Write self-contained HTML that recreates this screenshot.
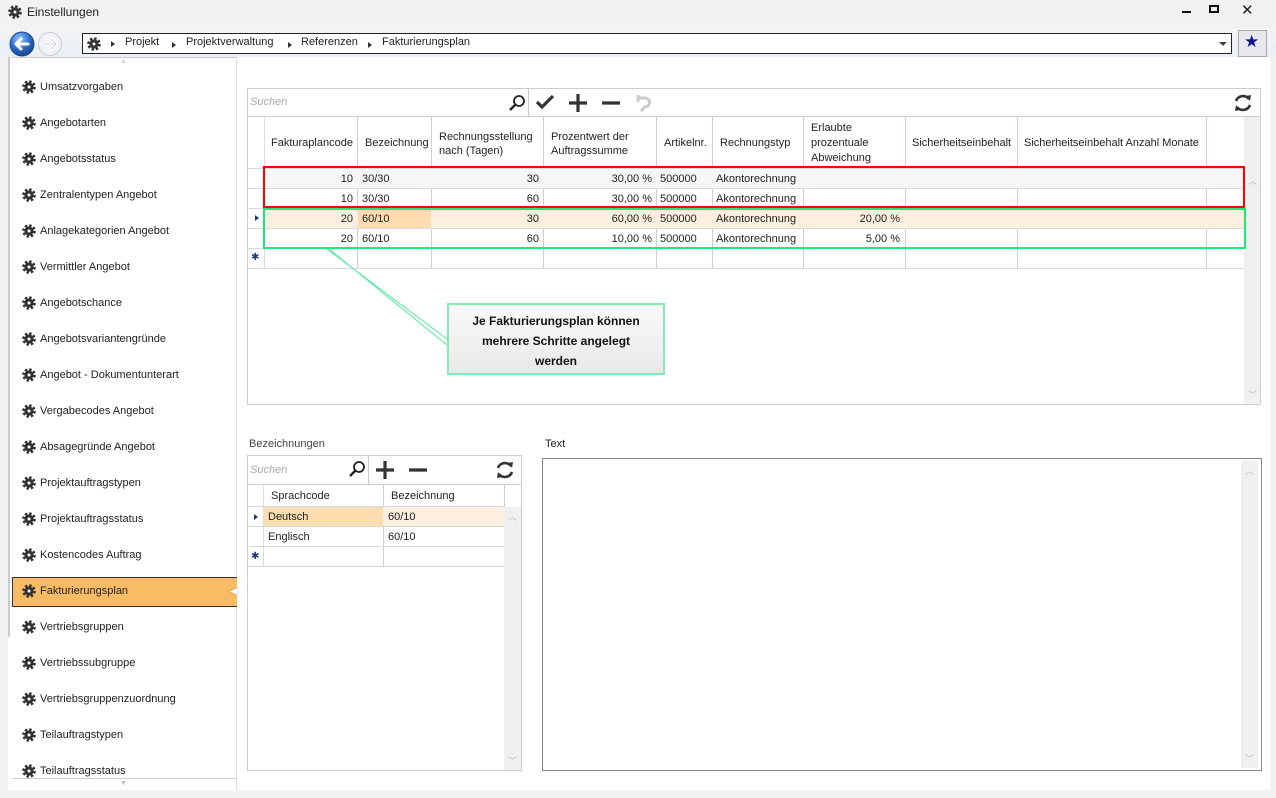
<!DOCTYPE html>
<html><head><meta charset="utf-8"><style>
*{margin:0;padding:0;box-sizing:border-box}
body{width:1276px;height:798px;background:#f2f2f2;font-family:"Liberation Sans",sans-serif;font-size:11px;color:#222;position:relative;overflow:hidden}
.a{position:absolute}
.t{position:absolute;white-space:nowrap}
.g{position:absolute;width:14px;height:14px}
.si{position:absolute;left:22px;height:20px;line-height:20px;padding-left:18px;font-size:11px}
.si svg{position:absolute;left:0;top:3px}
.vl{position:absolute;width:1px;background:#c8d0dc}
.hl{position:absolute;height:1px;background:#d5dae2}
.c{position:absolute;height:20px;line-height:20px;white-space:nowrap}
.r{text-align:right}
.tri{position:absolute;width:0;height:0;border-left:4px solid #333;border-top:3px solid transparent;border-bottom:3px solid transparent}
</style></head><body>
<svg width="0" height="0" style="position:absolute"><defs>
<symbol id="gear" viewBox="0 0 14 14"><circle cx="7" cy="7" r="4.6" fill="#333"/><circle cx="7" cy="7" r="5.4" fill="none" stroke="#333" stroke-width="2.8" stroke-dasharray="2.4 1.84"/><circle cx="7" cy="7" r="1.5" fill="#fff"/></symbol>
<symbol id="mag" viewBox="0 0 18 18"><circle cx="11" cy="7" r="5" fill="none" stroke="#222" stroke-width="1.8"/><path d="M7.5 10.5L2 16" stroke="#222" stroke-width="2.4"/></symbol>
<symbol id="ref" viewBox="0 0 20 20"><path d="M16 6A7.5 7.5 0 0 0 3 8M4 14A7.5 7.5 0 0 0 17 12" stroke="#333" stroke-width="2.6" fill="none"/><path d="M13 3L18 2L17 8ZM7 17L2 18L3 12Z" fill="#333"/></symbol>
</defs></svg>

<!-- title bar -->
<svg class="g" style="left:8px;top:5px"><use href="#gear"/></svg>
<div class="t" style="left:27px;top:5px;font-size:12px">Einstellungen</div>
<div class="a" style="left:1182px;top:11px;width:9px;height:2px;background:#111"></div>
<div class="a" style="left:1209px;top:5px;width:10px;height:8px;border:2px solid #111"></div>
<div class="t" style="left:1241px;top:1px;font-size:15px">✕</div>

<!-- nav bar -->
<div class="a" style="left:0;top:28px;width:1276px;height:29px;background:linear-gradient(#f4f4f4,#e9eef7)"></div>
<svg class="a" style="left:9px;top:31px" width="56" height="26">
<defs><radialGradient id="bl" cx="40%" cy="30%" r="70%"><stop offset="0" stop-color="#9ccaf8"/><stop offset=".6" stop-color="#2a6cc8"/><stop offset="1" stop-color="#17468f"/></radialGradient></defs>
<circle cx="13" cy="13" r="12" fill="url(#bl)" stroke="#1b4c90"/>
<path d="M19 13H8M12 8L7 13L12 18" stroke="#fff" stroke-width="3" fill="none" stroke-linecap="round" stroke-linejoin="round"/>
<circle cx="41" cy="13" r="11.5" fill="#f2f3f6" stroke="#c8ccd4"/>
<path d="M35 13H46M42 8L47 13L42 18" stroke="#fff" stroke-width="3" fill="none" stroke-linecap="round" stroke-linejoin="round"/>
<path d="M35 13H46M42 8L47 13L42 18" stroke="#cfd3da" stroke-width="1" fill="none"/>
</svg>
<div class="a" style="left:82px;top:33px;width:1150px;height:21px;border:1px solid #222;background:#fff"></div>
<svg class="g" style="left:87px;top:37px"><use href="#gear"/></svg>
<div class="tri" style="left:111px;top:41px"></div><div class="t" style="left:125px;top:36px">Projekt</div>
<div class="tri" style="left:172px;top:42px"></div><div class="t" style="left:186px;top:36px">Projektverwaltung</div>
<div class="tri" style="left:288px;top:42px"></div><div class="t" style="left:301px;top:36px">Referenzen</div>
<div class="tri" style="left:368px;top:42px"></div><div class="t" style="left:382px;top:36px">Fakturierungsplan</div>
<div class="a" style="left:1219px;top:42px;width:0;height:0;border-top:4px solid #444;border-left:4px solid transparent;border-right:4px solid transparent"></div>
<div class="a" style="left:1238px;top:30px;width:29px;height:27px;border:1px solid #aaa;background:#e8e8ec"></div>
<div class="t" style="left:1244px;top:32px;font-size:17px;color:#0a1a8c">★</div>

<!-- content white -->
<div class="a" style="left:8px;top:57px;width:1262px;height:733px;background:#fff"></div>
<div class="a" style="left:8px;top:57px;width:2px;height:580px;background:#ccc"></div>
<div class="a" style="left:12px;top:57px;width:225px;height:1px;background:#ccc"></div>
<div class="t" style="left:120px;top:58px;font-size:7px;color:#ccc">▲</div>
<div class="a" style="left:236px;top:57px;width:1px;height:733px;background:#ddd"></div>
<div class="a" style="left:12px;top:778px;width:225px;height:1px;background:#ccc"></div>
<div class="t" style="left:120px;top:780px;font-size:7px;color:#bbb">▼</div>

<!-- sidebar -->
<div class="a" style="left:12px;top:577px;width:225px;height:30px;background:#f9bb63;border:1px solid #333;border-right:none"></div>
<div class="t" style="left:230px;top:586px;font-size:10px;color:#fff;text-shadow:0 0 1px #333">◀</div>
<div class="si" style="top:77px"><svg width="14" height="14"><use href="#gear"/></svg>Umsatzvorgaben</div>
<div class="si" style="top:113px"><svg width="14" height="14"><use href="#gear"/></svg>Angebotarten</div>
<div class="si" style="top:149px"><svg width="14" height="14"><use href="#gear"/></svg>Angebotsstatus</div>
<div class="si" style="top:185px"><svg width="14" height="14"><use href="#gear"/></svg>Zentralentypen Angebot</div>
<div class="si" style="top:221px"><svg width="14" height="14"><use href="#gear"/></svg>Anlagekategorien Angebot</div>
<div class="si" style="top:257px"><svg width="14" height="14"><use href="#gear"/></svg>Vermittler Angebot</div>
<div class="si" style="top:293px"><svg width="14" height="14"><use href="#gear"/></svg>Angebotschance</div>
<div class="si" style="top:329px"><svg width="14" height="14"><use href="#gear"/></svg>Angebotsvariantengründe</div>
<div class="si" style="top:365px"><svg width="14" height="14"><use href="#gear"/></svg>Angebot - Dokumentunterart</div>
<div class="si" style="top:401px"><svg width="14" height="14"><use href="#gear"/></svg>Vergabecodes Angebot</div>
<div class="si" style="top:437px"><svg width="14" height="14"><use href="#gear"/></svg>Absagegründe Angebot</div>
<div class="si" style="top:473px"><svg width="14" height="14"><use href="#gear"/></svg>Projektauftragstypen</div>
<div class="si" style="top:509px"><svg width="14" height="14"><use href="#gear"/></svg>Projektauftragsstatus</div>
<div class="si" style="top:545px"><svg width="14" height="14"><use href="#gear"/></svg>Kostencodes Auftrag</div>
<div class="si" style="top:581px"><svg width="14" height="14"><use href="#gear"/></svg>Fakturierungsplan</div>
<div class="si" style="top:617px"><svg width="14" height="14"><use href="#gear"/></svg>Vertriebsgruppen</div>
<div class="si" style="top:653px"><svg width="14" height="14"><use href="#gear"/></svg>Vertriebssubgruppe</div>
<div class="si" style="top:689px"><svg width="14" height="14"><use href="#gear"/></svg>Vertriebsgruppenzuordnung</div>
<div class="si" style="top:725px"><svg width="14" height="14"><use href="#gear"/></svg>Teilauftragstypen</div>
<div class="si" style="top:761px"><svg width="14" height="14"><use href="#gear"/></svg>Teilauftragsstatus</div>

<!-- main grid -->
<div class="a" style="left:247px;top:88px;width:1014px;height:317px;border:1px solid #ccc"></div>
<div class="a" style="left:248px;top:116px;width:1012px;height:1px;background:#ccc"></div>
<div class="t" style="left:250px;top:96px;color:#aaa;font-style:italic">Suchen</div>
<svg class="a" style="left:508px;top:94px" width="18" height="18"><use href="#mag"/></svg>
<div class="a" style="left:528px;top:89px;width:1px;height:27px;background:#ccc"></div>
<svg class="a" style="left:535px;top:94px" width="20" height="16"><path d="M2 8 L7 13 L18 2" stroke="#333" stroke-width="3.2" fill="none"/></svg>
<svg class="a" style="left:568px;top:93px" width="20" height="20"><path d="M10 1V19M1 10H19" stroke="#333" stroke-width="3.2"/></svg>
<svg class="a" style="left:601px;top:93px" width="20" height="20"><path d="M1 10H19" stroke="#333" stroke-width="3.2"/></svg>
<svg class="a" style="left:636px;top:94px" width="16" height="18"><path d="M3 4H9A4.5 4.5 0 0 1 9 13L5 17" stroke="#ccc" stroke-width="3" fill="none"/><path d="M2 1V8" stroke="#ccc" stroke-width="3"/></svg>
<svg class="a" style="left:1233px;top:93px" width="20" height="20"><use href="#ref"/></svg>

<!-- header -->
<div class="vl" style="left:264px;top:117px;height:152px;background:#ddd"></div>
<div class="vl" style="left:357px;top:117px;height:152px"></div>
<div class="vl" style="left:431px;top:117px;height:152px"></div>
<div class="vl" style="left:543px;top:117px;height:152px"></div>
<div class="vl" style="left:656px;top:117px;height:152px"></div>
<div class="vl" style="left:712px;top:117px;height:152px"></div>
<div class="vl" style="left:803px;top:117px;height:152px"></div>
<div class="vl" style="left:905px;top:117px;height:152px"></div>
<div class="vl" style="left:1017px;top:117px;height:152px"></div>
<div class="vl" style="left:1206px;top:117px;height:152px"></div>
<div class="a" style="left:1244px;top:117px;width:16px;height:287px;background:#f0f0f0"></div>
<div class="t" style="left:1248px;top:174px;color:#bbb;font-size:9px">︿</div>
<div class="t" style="left:1248px;top:388px;color:#bbb;font-size:9px">﹀</div>
<div class="t" style="left:271px;top:137px">Fakturaplancode</div>
<div class="t" style="left:365px;top:137px">Bezeichnung</div>
<div class="t" style="left:439px;top:130px;line-height:14px">Rechnungsstellung<br>nach (Tagen)</div>
<div class="t" style="left:551px;top:130px;line-height:14px">Prozentwert der<br>Auftragssumme</div>
<div class="t" style="left:664px;top:137px">Artikelnr.</div>
<div class="t" style="left:720px;top:137px">Rechnungstyp</div>
<div class="t" style="left:811px;top:121px;line-height:15px">Erlaubte<br>prozentuale<br>Abweichung</div>
<div class="t" style="left:912px;top:137px">Sicherheitseinbehalt</div>
<div class="t" style="left:1024px;top:137px">Sicherheitseinbehalt Anzahl Monate</div>

<!-- rows -->
<div class="a" style="left:265px;top:169px;width:979px;height:20px;background:#f6f6f6"></div>
<div class="a" style="left:265px;top:209px;width:979px;height:20px;background:#fdefdf"></div>
<div class="a" style="left:358px;top:209px;width:73px;height:20px;background:#fddcb0"></div>
<div class="hl" style="left:248px;top:168px;width:996px"></div>
<div class="hl" style="left:248px;top:188px;width:996px"></div>
<div class="hl" style="left:248px;top:208px;width:996px"></div>
<div class="hl" style="left:248px;top:228px;width:996px"></div>
<div class="hl" style="left:248px;top:248px;width:996px"></div>
<div class="hl" style="left:248px;top:268px;width:996px"></div>
<div class="tri" style="left:255px;top:215px;border-left-color:#1a3c7c"></div>
<div class="t" style="left:251px;top:252px;font-size:10px;color:#1a3c7c">✱</div>

<div class="c r" style="left:265px;top:169px;width:88px">10</div><div class="c" style="left:362px;top:169px">30/30</div><div class="c r" style="left:432px;top:169px;width:107px">30</div><div class="c r" style="left:544px;top:169px;width:108px">30,00 %</div><div class="c" style="left:660px;top:169px">500000</div><div class="c" style="left:716px;top:169px">Akontorechnung</div>
<div class="c r" style="left:265px;top:189px;width:88px">10</div><div class="c" style="left:362px;top:189px">30/30</div><div class="c r" style="left:432px;top:189px;width:107px">60</div><div class="c r" style="left:544px;top:189px;width:108px">30,00 %</div><div class="c" style="left:660px;top:189px">500000</div><div class="c" style="left:716px;top:189px">Akontorechnung</div>
<div class="c r" style="left:265px;top:209px;width:88px">20</div><div class="c" style="left:362px;top:209px">60/10</div><div class="c r" style="left:432px;top:209px;width:107px">30</div><div class="c r" style="left:544px;top:209px;width:108px">60,00 %</div><div class="c" style="left:660px;top:209px">500000</div><div class="c" style="left:716px;top:209px">Akontorechnung</div><div class="c r" style="left:804px;top:209px;width:96px">20,00 %</div>
<div class="c r" style="left:265px;top:229px;width:88px">20</div><div class="c" style="left:362px;top:229px">60/10</div><div class="c r" style="left:432px;top:229px;width:107px">60</div><div class="c r" style="left:544px;top:229px;width:108px">10,00 %</div><div class="c" style="left:660px;top:229px">500000</div><div class="c" style="left:716px;top:229px">Akontorechnung</div><div class="c r" style="left:804px;top:229px;width:96px">5,00 %</div>

<div class="a" style="left:263px;top:166px;width:982px;height:42px;border:2px solid #f00"></div>
<div class="a" style="left:263px;top:208px;width:983px;height:41px;border:2px solid #1fe87a"></div>

<!-- callout -->
<svg class="a" style="left:320px;top:245px" width="140" height="110"><path d="M7 4L127 94M9 4L127 100" stroke="#58e8a0" stroke-width="1" fill="none"/></svg>
<div class="a" style="left:447px;top:303px;width:218px;height:72px;border:2px solid #7fedb4;background:linear-gradient(#fafafa,#e8e8e8);text-align:center;font-weight:bold;font-size:12px;line-height:20px;padding-top:6px;color:#111">Je Fakturierungsplan können<br>mehrere Schritte angelegt<br>werden</div>

<!-- Bezeichnungen -->
<div class="t" style="left:249px;top:438px;color:#444">Bezeichnungen</div>
<div class="a" style="left:247px;top:455px;width:275px;height:316px;border:1px solid #ccc"></div>
<div class="a" style="left:248px;top:484px;width:273px;height:1px;background:#ccc"></div>
<div class="t" style="left:250px;top:464px;color:#aaa;font-style:italic">Suchen</div>
<svg class="a" style="left:348px;top:460px" width="18" height="18"><use href="#mag"/></svg>
<div class="a" style="left:368px;top:456px;width:1px;height:28px;background:#ccc"></div>
<svg class="a" style="left:375px;top:460px" width="20" height="20"><path d="M10 1V19M1 10H19" stroke="#333" stroke-width="3.2"/></svg>
<svg class="a" style="left:408px;top:460px" width="20" height="20"><path d="M1 10H19" stroke="#333" stroke-width="3.2"/></svg>
<svg class="a" style="left:495px;top:460px" width="20" height="20"><use href="#ref"/></svg>
<div class="vl" style="left:263px;top:485px;height:82px;background:#ddd"></div>
<div class="vl" style="left:383px;top:485px;height:82px"></div>
<div class="vl" style="left:504px;top:485px;height:22px"></div>
<div class="a" style="left:504px;top:507px;width:17px;height:263px;background:#f0f0f0"></div>
<div class="t" style="left:508px;top:510px;color:#bbb;font-size:9px">︿</div>
<div class="t" style="left:508px;top:754px;color:#bbb;font-size:9px">﹀</div>
<div class="t" style="left:271px;top:490px">Sprachcode</div>
<div class="t" style="left:391px;top:490px">Bezeichnung</div>
<div class="a" style="left:264px;top:507px;width:240px;height:20px;background:#fdefdf"></div>
<div class="a" style="left:264px;top:507px;width:119px;height:20px;background:#fddcb0"></div>
<div class="hl" style="left:248px;top:506px;width:256px"></div>
<div class="hl" style="left:248px;top:526px;width:256px"></div>
<div class="hl" style="left:248px;top:546px;width:256px"></div>
<div class="hl" style="left:248px;top:566px;width:256px"></div>
<div class="tri" style="left:254px;top:514px;border-left-color:#1a3c7c"></div>
<div class="t" style="left:251px;top:551px;font-size:10px;color:#1a3c7c">✱</div>
<div class="c" style="left:268px;top:507px">Deutsch</div><div class="c" style="left:388px;top:507px">60/10</div>
<div class="c" style="left:268px;top:527px">Englisch</div><div class="c" style="left:388px;top:527px">60/10</div>

<!-- Text -->
<div class="t" style="left:545px;top:438px">Text</div>
<div class="a" style="left:542px;top:458px;width:720px;height:313px;border:1px solid #888"></div>
<div class="a" style="left:1241px;top:461px;width:17px;height:307px;background:#f0f0f0"></div>
<div class="t" style="left:1245px;top:464px;color:#bbb;font-size:9px">︿</div>
<div class="t" style="left:1245px;top:752px;color:#bbb;font-size:9px">﹀</div>
</body></html>
